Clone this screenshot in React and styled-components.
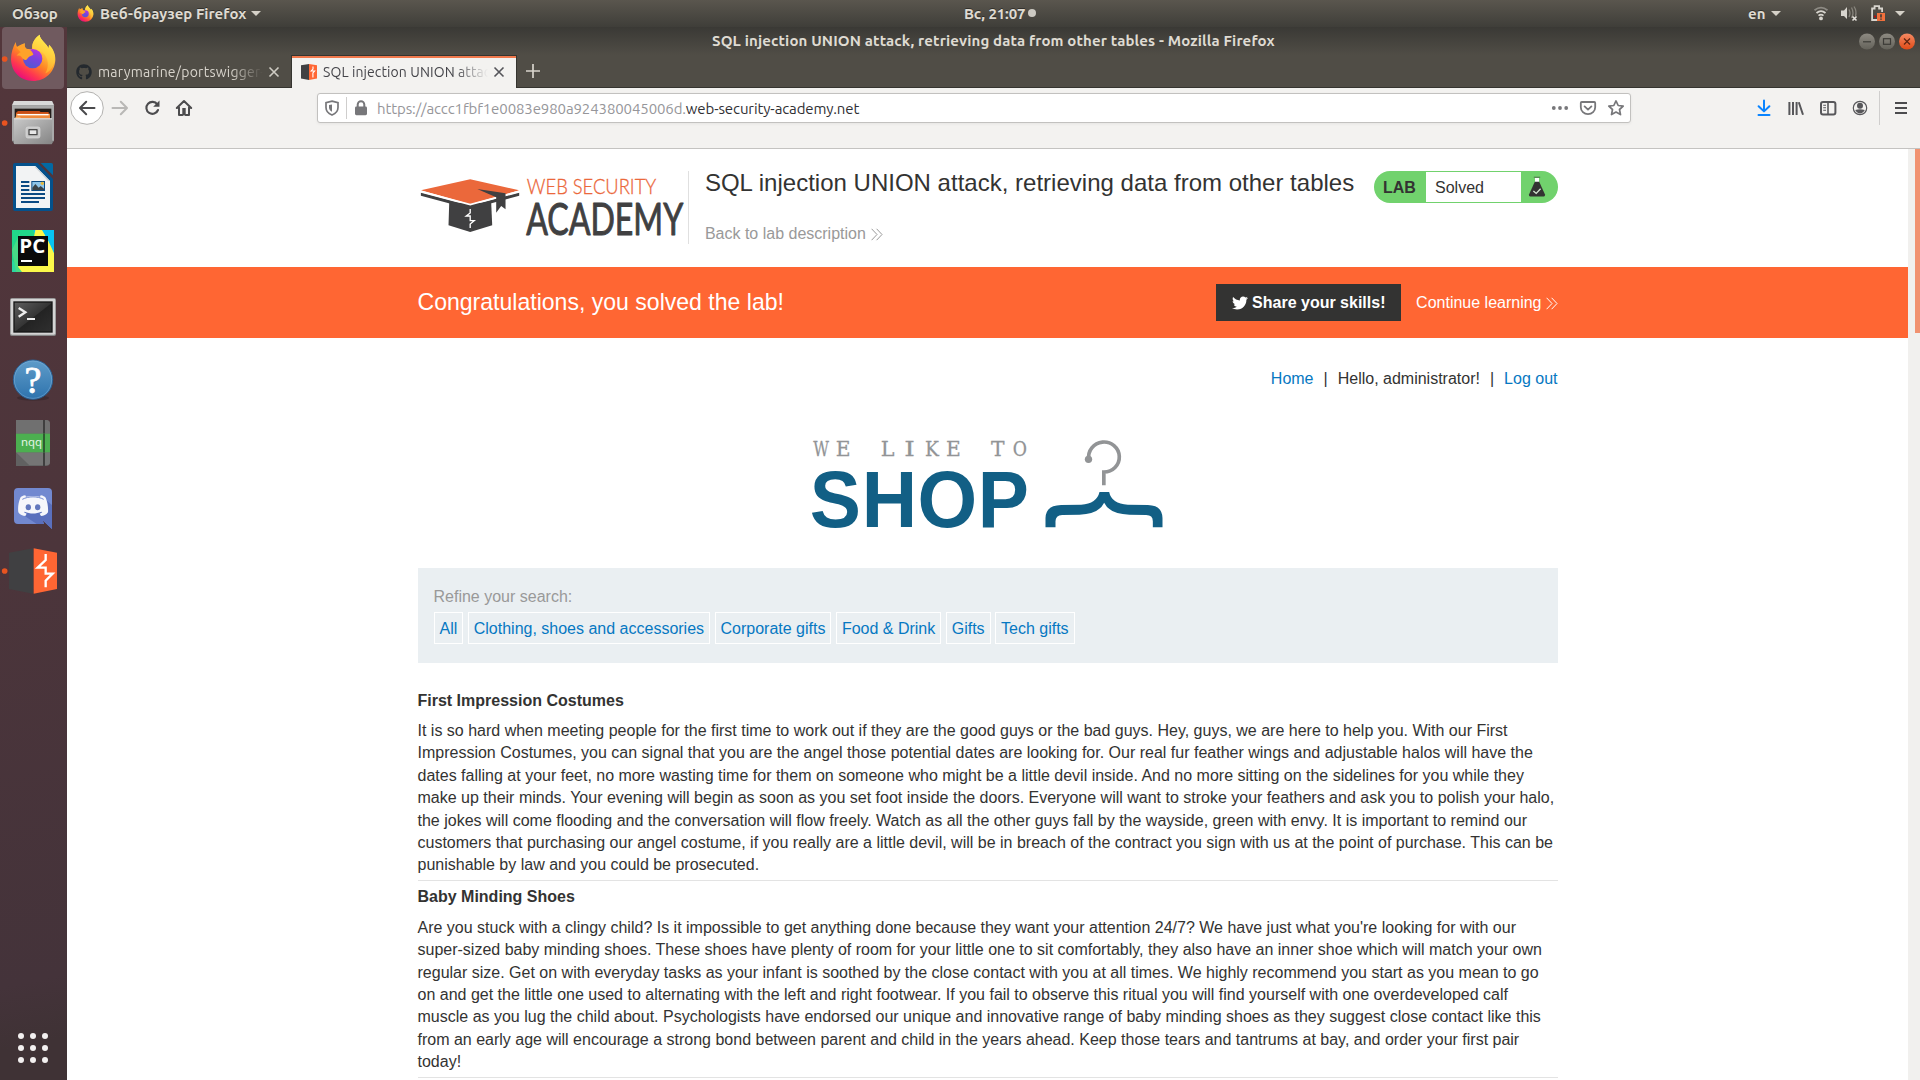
import React from "react";
import styled, { createGlobalStyle } from "styled-components";
import { FaTwitter, FaGithub } from "react-icons/fa";

const GlobalStyle = createGlobalStyle`
  * { box-sizing: border-box; }
  html, body { margin: 0; padding: 0; overflow: hidden; background: #fff; }
  svg { display: block; flex: none; }
`;

const UI_FONT = '"Ubuntu", "Open Sans", "Noto Sans", sans-serif';
const PAGE_FONT = '"Liberation Sans", Arial, sans-serif';

const Desktop = styled.div`
  width: 1920px;
  height: 1080px;
  display: flex;
  flex-direction: column;
  overflow: hidden;
  font-family: ${UI_FONT};
`;

const TopBar = styled.header`
  height: 27px;
  flex: none;
  display: grid;
  grid-template-columns: 964px 1fr auto;
  align-items: center;
  background: linear-gradient(#5a564e, #3f3e39);
  color: #dfdbd2;
  font-size: 15px;
  font-weight: 600;
  line-height: 27px;
`;
const TopGroup = styled.div`
  display: flex;
  align-items: center;
  height: 27px;
`;
const TopLabel = styled.span`
  white-space: nowrap;
  width: ${(p) => p.$w}px;
  margin-left: ${(p) => p.$ml || 0}px;
  letter-spacing: ${(p) => p.$ls || 0}px;
  text-shadow: 0 -1px 0 rgba(0, 0, 0, 0.4);
`;
const Caret = styled.i`
  width: 0;
  height: 0;
  margin: 0 ${(p) => p.$mr || 0}px 0 ${(p) => p.$ml || 0}px;
  border: 5px solid transparent;
  border-top-color: #d5d1c8;
  border-bottom: 0;
`;
const ClockDot = styled.i`
  width: 8px;
  height: 8px;
  margin-bottom: 1px;
  border-radius: 50%;
  background: #ccc9c2;
`;

const Body = styled.div`
  flex: 1;
  min-height: 0;
  display: flex;
`;
const Dock = styled.nav`
  width: 67px;
  flex: none;
  display: flex;
  flex-direction: column;
  background: linear-gradient(168deg, #53363b 0%, #4c353b 50%, #44333a 90%, #3f3235 96%);
`;
const DockItem = styled.div`
  width: 67px;
  height: 64px;
  flex: none;
  padding: 1px 3px 1px 2px;
  svg { margin: -1px 0 0 -2px; }
  & > div {
    height: 62px;
    width: 62px;
    border-radius: 4px;
    background: ${(p) => (p.$active ? "#705a5f" : "transparent")};
  }
`;
const AppsButton = styled.div`
  margin-top: auto;
  padding: 0 0 17px 18px;
  display: grid;
  grid-template-columns: repeat(3, 6px);
  gap: 6px;
`;
const AppDot = styled.i`
  width: 6px;
  height: 6px;
  border-radius: 50%;
  background: #f3f0f0;
`;

const Window = styled.main`
  flex: 1;
  min-width: 0;
  display: flex;
  flex-direction: column;
`;
const TitleBar = styled.div`
  height: 28px;
  flex: none;
  display: grid;
  grid-template-columns: 645px 1fr auto;
  align-items: center;
  background: linear-gradient(#3a3935, #504d46);
  color: #dfdbd2;
  font-size: 15px;
  font-weight: 600;
`;
const TitleText = styled.span`
  grid-column: 2;
  padding-bottom: 2px;
  white-space: nowrap;
  letter-spacing: 0.14px;
`;
const WinButtons = styled.div`
  display: flex;
  gap: 4px;
  padding-right: 5px;
`;

const TabStrip = styled.div`
  height: 33px;
  flex: none;
  display: flex;
  background: #504d46;
  box-shadow: inset 0 -1px 0 #35342f;
`;
const Tab = styled.div`
  width: ${(p) => (p.$active ? 226 : 224)}px;
  display: flex;
  align-items: center;
  padding-left: 9px;
  font-size: 14px;
  color: ${(p) => (p.$active ? "#45454a" : "#d8d4cc")};
  background: ${(p) => (p.$active ? "#f3f2f0" : "transparent")};
  border: solid #35342f;
  border-width: ${(p) => (p.$active ? "1px 1px 0" : "0")};
  box-shadow: ${(p) => (p.$active ? "inset 0 2px 0 #f0784c" : "none")};
`;
const TabText = styled.span`
  width: 165px;
  margin: 0 5px 0 6px;
  overflow: hidden;
  white-space: nowrap;
  letter-spacing: ${(p) => p.$ls || 0}px;
  mask-image: linear-gradient(90deg, #000 80%, transparent 100%);
`;
const NewTab = styled.div`
  padding: 9px 0 0 9px;
`;

const Toolbar = styled.div`
  height: 61px;
  flex: none;
  display: flex;
  align-items: flex-start;
  background: #f3f2f0;
  border-bottom: 1px solid #c4c3c1;
`;
const NavButtons = styled.div`
  width: 250px;
  height: 40px;
  display: flex;
  align-items: center;
  padding-left: 3px;
`;
const UrlBar = styled.div`
  width: 1314px;
  height: 30px;
  margin-top: 5px;
  display: flex;
  align-items: center;
  padding: 0 4px 0 7px;
  background: #fff;
  border: 1px solid #c2c1bf;
  border-radius: 3px;
  box-shadow: 0 1px 3px rgba(0, 0, 0, 0.06);
`;
const Divider = styled.i`
  width: 1px;
  height: ${(p) => p.$h}px;
  background: #cfcecd;
  margin: 0 ${(p) => p.$mr}px 0 ${(p) => p.$ml}px;
`;
const Url = styled.span`
  flex: 1;
  margin-left: 9px;
  padding-top: 1px;
  white-space: nowrap;
  font-size: 15px;
  color: #96969a;
  letter-spacing: -0.11px;
  b { font-weight: 400; color: #303034; }
`;
const UrlActions = styled.div`
  display: flex;
  gap: 8px;
`;
const ToolActions = styled.div`
  flex: 1;
  height: 40px;
  display: flex;
  align-items: center;
  justify-content: flex-end;
  padding-right: 9px;
`;
const ToolGroup = styled.div`
  display: flex;
  gap: 12px;
`;

const Viewport = styled.div`
  flex: 1;
  min-height: 0;
  display: flex;
  overflow: hidden;
  font-family: ${PAGE_FONT};
  font-size: 16px;
  line-height: 22.4px;
  color: #333332;
`;
const Page = styled.div`
  flex: 1;
  background: #fff;
  overflow: hidden;
`;
const ScrollTrack = styled.div`
  width: 12px;
  background: #f1f0ee;
  display: flex;
  justify-content: flex-end;
`;
const ScrollThumb = styled.div`
  width: 5px;
  height: 184px;
  background: #f19270;
`;
const Container = styled.div`
  width: 1140px;
  margin: 0 auto;
`;
const LabHeader = styled(Container)`
  height: 118px;
  display: flex;
  align-items: flex-start;
  padding-top: 22px;
`;
const LabTitle = styled.div`
  flex: 1;
  height: 73px;
  padding-left: 16px;
  border-left: 1px solid #e0e0e0;
  h2 {
    margin: -2px 0 26px;
    font-size: 24px;
    line-height: 28px;
    font-weight: 400;
    letter-spacing: 0.01px;
  }
`;
const ArrowLink = styled.a`
  display: flex;
  align-items: center;
  gap: ${(p) => p.$gap}px;
  padding-top: ${(p) => p.$pt || 0}px;
  color: ${(p) => p.$color};
`;
const Badge = styled.div`
  width: 184px;
  height: 32px;
  display: flex;
  align-items: stretch;
  padding: 1px 0;
  border-radius: 16px;
  background: #71d26d;
  line-height: 30px;
  b { width: 52px; padding: 1px 0 0 9.5px; }
  span { width: 95px; padding: 1px 0 0 9.5px; background: #fff; }
`;
const BadgeIcon = styled.div`
  flex: 1;
  padding: 4px 0 0 7px;
`;
const Banner = styled.div`
  height: 71px;
  background: #ff6633;
  color: #fff;
`;
const BannerRow = styled(Container)`
  height: 71px;
  display: flex;
  align-items: center;
  h4 { flex: 1; margin: 0; padding-bottom: 1px; font-size: 23.05px; line-height: 28px; font-weight: 400; }
`;
const ShareButton = styled.button`
  width: 185px;
  height: 37px;
  margin-right: 15px;
  padding: 0;
  display: flex;
  align-items: center;
  justify-content: center;
  gap: 4.4px;
  border: 0;
  background: #333332;
  color: #fff;
  font: bold 16px ${PAGE_FONT};
`;
const AccountNav = styled(Container)`
  display: flex;
  justify-content: flex-end;
  padding-top: 30px;
  gap: 10px;
`;
const Link = styled.a`
  color: #0678c2;
`;
const ShopHeader = styled(Container)`
  height: 177.6px;
  display: flex;
  padding: 48.6px 0 0 389.5px;
`;
const Filters = styled(Container)`
  height: 95px;
  padding: 18px 16px;
  background: #eaeff2;
  p { margin: 0 0 3.6px; color: #999; }
`;
const FilterList = styled.div`
  display: flex;
  gap: 4.45px;
`;
const Filter = styled.a`
  height: 32px;
  padding: 0 5px;
  line-height: 31px;
  border: 1px solid #fff;
  color: #0678c2;
`;
const Products = styled(Container)`
  padding-top: 26.6px;
`;
const Product = styled.article`
  padding-bottom: 3.2px;
  margin-bottom: 5.4px;
  border-bottom: 1px solid #e3e3e3;
  h3 { margin: 0 0 8px; font-size: 16px; line-height: 22.4px; }
  p { margin: 0; }
`;

const FoxArt = ({ id }) => (
  <g>
    <defs>
      <linearGradient id={id + "a"} x1="0.8" y1="0.1" x2="0.25" y2="0.95">
        <stop offset="0" stopColor="#fff44f" />
        <stop offset="0.3" stopColor="#ffbd3a" />
        <stop offset="0.55" stopColor="#ff8424" />
        <stop offset="0.8" stopColor="#ff3750" />
        <stop offset="1" stopColor="#ea0e7a" />
      </linearGradient>
      <linearGradient id={id + "b"} x1="0.7" y1="0" x2="0.3" y2="1">
        <stop offset="0" stopColor="#b833e1" />
        <stop offset="0.45" stopColor="#7a42e0" />
        <stop offset="1" stopColor="#4d5bd0" />
      </linearGradient>
      <linearGradient id={id + "c"} x1="0.7" y1="0" x2="0.4" y2="1">
        <stop offset="0" stopColor="#fff351" />
        <stop offset="0.6" stopColor="#ffc63a" />
        <stop offset="1" stopColor="#ff9a2a" />
      </linearGradient>
    </defs>
    <path fill={`url(#${id}a)`} d="M47 66C48 74 50 80 54 84C60 76 68 71 75 70C73 76 74 82 78 86C85 87 92 88 97 86C95 70 103 55 119 44C120 58 132 64 140 76L146 84L147 74C158 84 167 100 166 120C164 158 134 183 99 183C62 183 34 156 33 118C33 98 39 82 47 66Z" />
    <path fill={`url(#${id}c)`} d="M97 86C95 70 103 55 119 44C120 58 132 64 140 76L146 86L147 76C158 88 166 102 164 122C160 142 148 156 136 160C148 140 146 112 128 98C118 92 104 92 97 86Z" />
    <circle cx="98" cy="116" r="29" fill={`url(#${id}b)`} />
    <path fill="#ffa229" d="M49 82C60 74 66 72 74 72C73 78 76 84 82 88C92 88 98 96 100 104C92 108 84 110 81 118C76 124 68 116 64 110C60 106 54 106 50 108C54 100 60 98 62 97Z" />
  </g>
);

const FoxMini = () => (
  <svg width="17" height="17" viewBox="30 42 139 143"><FoxArt id="m" /></svg>
);

const BurpMini = () => (
  <svg width="16" height="16" viewBox="0 0 16 16">
    <path d="M0 1.2 8 0V16L0 14.6Z" fill="#404042" />
    <path d="M8 0 16 1.2V14.6L8 16Z" fill="#ff6633" />
    <path d="M12 2.4V5L10.2 7H13.6L11.9 9V13.6" stroke="#fff" strokeWidth="1.1" fill="none" />
  </svg>
);

const Dot = ({ y }) => <circle cx="14" cy={y} r="8.5" fill="#e95420" />;

const dockIcons = [
  { y: 21, art: <><Dot y={117} /><FoxArt id="d" /></> },
  {
    y: 213,
    art: (
      <>
        <defs>
          <linearGradient id="cab" x1="0" y1="0" x2="1" y2="1"><stop offset="0" stopColor="#c9c9c9" /><stop offset="1" stopColor="#858585" /></linearGradient>
        </defs>
        <Dot y={309} />
        <path d="M42 243H156L162 256V362L155 373H43L36 362V256Z" fill="#7d7d7d" />
        <path d="M42 243H156L162 256H36Z" fill="#d9d9d9" />
        <path d="M36 256H162V362H36Z" fill="#a9a9a9" />
        <rect x="44" y="266" width="110" height="32" fill="#241d1a" />
        <path d="M54 273H118L122 276H146V298H48V278Z" fill="#c74d16" />
        <path d="M48 281H150V298H48Z" fill="#f08a3c" />
        <rect x="52" y="282" width="94" height="4" fill="#fff" />
        <path d="M46 290H60L64 296H150V300H46Z" fill="#f9b06b" />
        <rect x="42" y="295" width="114" height="77" fill="url(#cab)" />
        <rect x="42" y="295" width="114" height="3" fill="#e4e4e4" />
        <rect x="78" y="321" width="42" height="33" rx="6" fill="#c9c9c9" stroke="#dcdcdc" strokeWidth="2" />
        <rect x="85" y="327" width="28" height="19" rx="2" fill="#4b4b4b" />
        <rect x="89" y="331" width="20" height="11" fill="#e7e7e7" />
      </>
    ),
  },
  {
    y: 405,
    art: (
      <>
        <path d="M45 429H113L159 477V567Q159 573 153 573H45Q39 573 39 567V435Q39 429 45 429Z" fill="#04518c" />
        <path d="M122 429H154Q159 429 159 434V466Z" fill="#0369a3" />
        <path d="M48 438H106L150 483V564H48Z" fill="#f2f3f4" />
        <path d="M106 438 150 483H150L144 483 104 441Z" fill="#cfd4d8" />
        <path d="M63 486H88M63 498H88M63 510H88M63 522H135M63 534H135M63 546H117" stroke="#0b4a83" strokeWidth="6" />
        <rect x="94" y="483" width="41" height="30" fill="#0b4a83" />
        <rect x="97" y="486" width="35" height="24" fill="#8ec5ea" />
        <path d="M97 510V503L106 492 116 503 122 498 132 506V510Z" fill="#3b4348" />
        <circle cx="127" cy="490" r="5" fill="#e7b93c" />
      </>
    ),
  },
  {
    y: 597,
    art: (
      <>
        <rect x="36" y="630" width="126" height="126" fill="#21d789" />
        <path d="M36 720 66 756H36Z" fill="#2bd7a0" />
        <path d="M100 630H162V756L120 690Z" fill="#0bc4ea" />
        <path d="M36 690 60 640 66 756H48Z" fill="#47dc86" />
        <path d="M106 630H126L162 690V756H66L54 740 100 660Z" fill="#fcf84a" />
        <path d="M128 630H162V700L144 660Z" fill="#07c3f2" />
        <rect x="54" y="648" width="90" height="90" fill="#0a0a0a" />
        <text x="58" y="700" fontFamily='"Open Sans"' fontWeight="700" fontSize="57" textLength="78" lengthAdjust="spacingAndGlyphs" fill="#fff">PC</text>
        <rect x="63" y="720" width="33" height="6" fill="#fff" />
      </>
    ),
  },
  {
    y: 789,
    art: (
      <>
        <defs>
          <linearGradient id="term" x1="0" y1="0" x2="1" y2="1"><stop offset="0" stopColor="#5d5d5d" /><stop offset="0.5" stopColor="#353535" /><stop offset="0.52" stopColor="#232323" /><stop offset="1" stopColor="#2f2f2f" /></linearGradient>
        </defs>
        <rect x="30" y="834" width="138" height="114" rx="5" fill="#858585" />
        <rect x="32" y="836" width="134" height="108" rx="4" fill="#d4d4d4" />
        <rect x="40" y="844" width="118" height="94" fill="#151515" />
        <rect x="44" y="848" width="110" height="86" fill="url(#term)" />
        <path d="M56 864 76 877 56 890" stroke="#eee" strokeWidth="7" fill="none" />
        <rect x="81" y="894" width="24" height="6" fill="#eee" />
      </>
    ),
  },
  {
    y: 21,
    art: (
      <>
        <defs>
          <linearGradient id="help" x1="0" y1="0" x2="0" y2="1"><stop offset="0" stopColor="#5f9cc9" /><stop offset="1" stopColor="#2e73ad" /></linearGradient>
        </defs>
        <ellipse cx="99" cy="174" rx="48" ry="8" fill="#000" opacity="0.18" />
        <circle cx="99" cy="119" r="59" fill="url(#help)" stroke="#2a5f92" strokeWidth="3" />
        <circle cx="99" cy="119" r="56" fill="none" stroke="#86b5dc" strokeWidth="2" opacity="0.7" />
        <text x="99" y="160" textAnchor="middle" fontFamily='"Liberation Serif"' fontWeight="400" fontSize="114" fill="#fff" stroke="#fff" strokeWidth="2.5">?</text>
      </>
    ),
  },
  {
    y: 213,
    art: (
      <>
        <path d="M48 240H138Q150 240 150 252V366Q150 378 138 378H48Z" fill="#616161" />
        <path d="M48 240H138Q150 240 150 252V281H48Z" fill="#707070" />
        <path d="M48 337 88 376H138Q150 376 150 366V337Z" fill="#757575" />
        <rect x="129" y="240" width="6" height="138" fill="#3f3f3f" />
        <rect x="48" y="281" width="102" height="56" fill="#4caf50" />
        <rect x="129" y="281" width="6" height="56" fill="#2f5b31" />
        <text x="63" y="317" fontFamily='"Noto Sans"' fontSize="33" textLength="63" lengthAdjust="spacingAndGlyphs" fill="#e5f4e6">nqq</text>
      </>
    ),
  },
  {
    y: 405,
    art: (
      <>
        <path d="M54 444H144Q156 444 156 456V567L128 541 132 552H54Q42 552 42 540V456Q42 444 54 444Z" fill="#7289d0" />
        <path d="M122 467 156 495V567L128 541 132 552H110L62 520Z" fill="#5a70bd" />
        <path d="M76 466C68 467 63 470 61 473C55 487 53 503 55 517C60 525 68 528 76 528L80 521L72 517L74 515C90 522 108 522 124 515L127 517L119 521L123 528C131 528 139 525 144 517C145 503 143 487 137 473C134 470 129 467 122 466L120 470C106 467 92 467 78 470Z" fill="#f6f7fb" />
        <ellipse cx="85" cy="502" rx="8" ry="9" fill="#6378bd" />
        <ellipse cx="113" cy="502" rx="8" ry="9" fill="#6378bd" />
        <path d="M67 478C85 468 113 468 131 478" stroke="#7289d0" strokeWidth="3" fill="none" />
      </>
    ),
  },
  {
    y: 597,
    art: (
      <>
        <Dot y={693} />
        <path d="M27 638 99 625V761L27 747Z" fill="#404042" />
        <path d="M101 625 171 638V747L101 761Z" fill="#ff6633" />
        <path d="M137 642V660L113 683H137V701H158L137 722V742" stroke="#fff" strokeWidth="7" fill="none" />
      </>
    ),
  },
];

const Chevrons = ({ color }) => (
  <svg width="12" height="13" viewBox="0 0 12 13" fill="none" stroke={color} strokeWidth="1">
    <path d="M0.6 0.8 6 6.5 0.6 12.2M5.6 0.8 11 6.5 5.6 12.2" />
  </svg>
);

const CloseX = ({ color }) => (
  <svg width="12" height="12" viewBox="0 0 12 12" stroke={color} strokeWidth="1.6"><path d="M1.5 1.5 10.5 10.5M10.5 1.5 1.5 10.5" /></svg>
);

const StatusIcons = () => (
  <svg width="84" height="27" viewBox="0 0 84 27" fill="none">
    <g stroke="#d8d5ce" strokeWidth="1.8">
      <path d="M4.5 10.2Q11 5 17.5 10.2" opacity="0.45" />
      <path d="M6.5 13Q11 9.3 15.5 13" />
      <path d="M8.5 15.6Q11 13.7 13.5 15.6" />
    </g>
    <circle cx="11" cy="18.4" r="1.9" fill="#d8d5ce" />
    <path d="M31 10.5H34L37 7V19L34 16H31Z" fill="#d8d5ce" />
    <path d="M39 9.5Q41 13 39 17M41.5 7.5Q44.5 13 41.5 18M44 6.5Q47 11 45.5 16" stroke="#88857d" strokeWidth="1.3" />
    <path d="M42.5 16.5 46.5 20.5M46.5 16.5 42.5 20.5" stroke="#e3e0da" strokeWidth="1.6" />
    <path d="M67.6 20H62.1V8.5H64.6V6.2H69.1V8.5H72.1V12" stroke="#d8d5ce" strokeWidth="1.8" />
    <rect x="67" y="13" width="8" height="8" fill="#f0703c" />
    <path d="M71 14.3V17.4M71 18.4V19.8" stroke="#3c3b37" strokeWidth="1.6" />
    <circle cx="65" cy="16.5" r="1" fill="#c00" />
  </svg>
);

const WindowButton = ({ kind }) => {
  const close = kind === "close";
  return (
    <svg width="16" height="17" viewBox="0 0 16 17">
      <defs>
        <linearGradient id={"wb" + kind} x1="0" y1="0" x2="0" y2="1">
          <stop offset="0" stopColor={close ? "#f58a63" : "#8d8a82"} />
          <stop offset="1" stopColor={close ? "#df4a16" : "#64625a"} />
        </linearGradient>
      </defs>
      <circle cx="8" cy="8.5" r="8" fill={`url(#wb${kind})`} />
      <g stroke={close ? "#5e2410" : "#3c3b37"} strokeWidth="1.2" fill="none">
        {kind === "min" && <path d="M4 8.8H12" />}
        {kind === "max" && <rect x="4.5" y="5.7" width="7" height="5.6" />}
        {close && <path d="M5 5.5 11 11.5M11 5.5 5 11.5" />}
      </g>
    </svg>
  );
};

const NavIcons = () => (
  <svg width="140" height="40" viewBox="0 0 140 40" fill="none">
    <circle cx="17" cy="20" r="16.3" fill="#fff" stroke="#b3b2b0" />
    <path d="M24.5 20H10.5M16.2 13.8 10 20 16.2 26.2" stroke="#4a4a4c" strokeWidth="2" strokeLinecap="round" strokeLinejoin="round" />
    <path d="M42.5 20H56.5M50.8 13.8 57 20 50.8 26.2" stroke="#b9b8b6" strokeWidth="2" strokeLinecap="round" strokeLinejoin="round" />
    <path d="M87.3 16.4A6 6 0 1 0 88 22" stroke="#4c4c4e" strokeWidth="2.1" strokeLinecap="round" />
    <path d="M89.5 12.5V18.8H83.2Z" fill="#4c4c4e" />
    <path d="M106.8 20 114 13 121.2 20M109 19.5V27H112.3M119 19.5V27H115.7" stroke="#4c4c4e" strokeWidth="2" strokeLinecap="round" strokeLinejoin="round" />
    <rect x="112.3" y="20" width="3.4" height="7.4" fill="#4c4c4e" />
  </svg>
);

const ShieldIcon = () => (
  <svg width="14" height="16" viewBox="0 0 14 16" fill="none" stroke="#77777a" strokeWidth="1.7">
    <path d="M7 1.2 13 2.6V7.5C13 11 10.5 13.6 7 15C3.5 13.6 1 11 1 7.5V2.6Z" />
    <path d="M7 4.4V11.8C5.2 10.9 4 9.4 4 7.3V5Z" fill="#77777a" stroke="none" />
  </svg>
);
const LockIcon = () => (
  <svg width="14" height="16" viewBox="0 0 14 16">
    <path d="M3.7 7V4.6A3.3 3.3 0 0 1 10.3 4.6V7" fill="none" stroke="#77777a" strokeWidth="2" />
    <rect x="1" y="6.5" width="12" height="8.7" rx="1.4" fill="#77777a" />
  </svg>
);
const actionIcons = [
  <g key="a" fill="#77777a"><circle cx="3.8" cy="10" r="1.9" /><circle cx="10" cy="10" r="1.9" /><circle cx="16.2" cy="10" r="1.9" /></g>,
  <g key="b" fill="none" stroke="#77777a" strokeWidth="1.8" strokeLinecap="round" strokeLinejoin="round"><path d="M3.8 4H16.2Q17.2 4 17.2 5V9.2A7.2 7 0 0 1 2.8 9.2V5Q2.8 4 3.8 4Z" /><path d="M6.6 8.4 10 11.6 13.4 8.4" /></g>,
  <path key="c" fill="none" stroke="#77777a" strokeWidth="1.7" strokeLinejoin="round" d="M10 2.9 12.2 7.5 17.2 8.1 13.5 11.5 14.5 16.6 10 14.1 5.5 16.6 6.5 11.5 2.8 8.1 7.8 7.5Z" />,
];
const toolIcons = [
  <path key="a" d="M10 2.5V13M4.6 8.2 10 13.4 15.4 8.2M4.5 17H15.5" stroke="#0a84ff" strokeWidth="2" fill="none" strokeLinecap="round" strokeLinejoin="round" />,
  <path key="b" d="M3.4 4V17M7 4V17M10.6 4V17M12.8 4.2 17 16.8" stroke="#57575a" strokeWidth="2" fill="none" />,
  <g key="c" stroke="#57575a" fill="none"><rect x="3" y="4" width="14.4" height="12.4" rx="2" strokeWidth="2" /><path d="M10 4V16.4" strokeWidth="1.6" /><path d="M5.2 7.2H8M5.2 9.7H8M5.2 12.2H8" strokeWidth="1.1" /></g>,
  <g key="d"><circle cx="10" cy="10" r="6.7" fill="none" stroke="#57575a" strokeWidth="1.2" /><circle cx="10" cy="7.8" r="3" fill="#57575a" /><path d="M5.2 12Q10 10.4 14.8 12 13 15.4 10 15.4T5.2 12Z" fill="#57575a" /></g>,
];

const AcademyLogo = () => (
  <svg width="270.4" height="72" viewBox="0 0 270.4 72" overflow="visible">
    <g transform="translate(-17.8 -21) scale(0.33333)">
      <path d="M147 158H273L276 226 210 246 145 226Z" fill="#404041" />
      <path d="M62 128 210 167 357 128V137L210 177 62 137Z" fill="#404041" />
      <path d="M62 121 210 88 357 121 210 163Z" fill="#eb683b" />
      <path d="M62 124 210 164 357 124" fill="none" stroke="#fff" strokeWidth="5" />
      <path d="M231 117 316 130V178L303 168 288 188V142Z" fill="#404041" />
      <path d="M210 177V189L198 198H210V212H222L210 222V234" stroke="#fff" strokeWidth="4" fill="none" />
      <text x="380" y="133" fontFamily="Lato" fontWeight="300" fontSize="67" fill="#eb683b" stroke="#eb683b" strokeWidth="1" textLength="388" lengthAdjust="spacingAndGlyphs">WEB SECURITY</text>
      <text x="378" y="254" fontFamily="Lato" fontSize="134" fill="#404041" stroke="#404041" strokeWidth="3" strokeLinejoin="round" textLength="471" lengthAdjust="spacingAndGlyphs">ACADEMY</text>
    </g>
  </svg>
);

const FlaskIcon = () => (
  <svg width="18" height="22" viewBox="0 0 18 22">
    <path d="M5.8 1.3H12.2" stroke="#5b8a58" strokeWidth="1.4" />
    <rect x="7" y="2" width="4" height="4.5" fill="#fff" />
    <path d="M6.8 5.8H11.2L17 18.6Q17.3 20.6 15.8 20.6H2.2Q0.7 20.6 1 18.6Z" fill="#333332" />
    <path d="M5.4 15 8.2 17.4 12.6 12.8" stroke="#d5e8d4" strokeWidth="1.3" fill="none" />
  </svg>
);

const taglineLetters = [["W", 125, 0.74], ["E", 191, 0.98], ["L", 324, 1], ["I", 390, 1.3], ["K", 457, 0.9], ["E", 522, 0.98], ["T", 655, 0.98], ["O", 721, 0.84]];
const wordLetters = [["S", 91], ["H", 246.6], ["O", 414], ["P", 595]];

const ShopLogo = () => (
  <svg width="360" height="100" viewBox="0 0 360 100" overflow="visible">
    <g transform="translate(-27.5 -29.3) scale(0.33333)">
      {taglineLetters.map(([ch, x, sx]) => (
        <text key={x} transform={`translate(${x} 139.5) scale(${sx} 1)`} textAnchor="middle" fontFamily='"DejaVu Serif"' fontSize="62" fill="#929496" stroke="#929496" strokeWidth="0.8">{ch}</text>
      ))}
      {wordLetters.map(([ch, x]) => (
        <text key={x} transform={`translate(${x} 353) scale(0.955 1)`} fontFamily='"Liberation Sans"' fontWeight="700" fontSize="241" fill="#125f85">{ch}</text>
      ))}
      <path d="M928 149A46 45 0 1 1 973 187V227" fill="none" stroke="#929496" strokeWidth="11" />
      <circle cx="927" cy="149" r="11" fill="#929496" />
      <path fill="#125f85" d="M798 353V325Q799 287 845 286L905 285Q952 282 960 247H989Q996 282 1045 285L1105 286Q1148 287 1149 325V353H1120V335Q1120 316 1100 316L1050 315Q990 313 974 279Q958 313 900 315L848 316Q828 317 828 335V353Z" />
    </g>
  </svg>
);

const categories = ["All", "Clothing, shoes and accessories", "Corporate gifts", "Food & Drink", "Gifts", "Tech gifts"];

const products = [
  {
    name: "First Impression Costumes",
    text: "It is so hard when meeting people for the first time to work out if they are the good guys or the bad guys. Hey, guys, we are here to help you. With our First Impression Costumes, you can signal that you are the angel those potential dates are looking for. Our real fur feather wings and adjustable halos will have the dates falling at your feet, no more wasting time for them on someone who might be a little devil inside. And no more sitting on the sidelines for you while they make up their minds. Your evening will begin as soon as you set foot inside the doors. Everyone will want to stroke your feathers and ask you to polish your halo, the jokes will come flooding and the conversation will flow freely. Watch as all the other guys fall by the wayside, green with envy. It is important to remind our customers that purchasing our angel costume, if you really are a little devil, will be in breach of the contract you sign with us at the point of purchase. This can be punishable by law and you could be prosecuted.",
  },
  {
    name: "Baby Minding Shoes",
    text: "Are you stuck with a clingy child? Is it impossible to get anything done because they want your attention 24/7? We have just what you're looking for with our super-sized baby minding shoes. These shoes have plenty of room for your little one to sit comfortably, they also have an inner shoe which will match your own regular size. Get on with everyday tasks as your infant is soothed by the close contact with you at all times. We highly recommend you start as you mean to go on and get the little one used to alternating with the left and right footwear. If you fail to observe this ritual you will find yourself with one overdeveloped calf muscle as you lug the child about. Psychologists have endorsed our unique and innovative range of baby minding shoes as they suggest close contact like this from an early age will encourage a strong bond between parent and child in the years ahead. Keep those tears and tantrums at bay, and order your first pair today!",
  },
];

export default function App() {
  return (
    <Desktop>
      <GlobalStyle />
      <TopBar>
        <TopGroup>
          <TopLabel $ml={12} $w={65} $ls={-0.1}>Обзор</TopLabel>
          <FoxMini />
          <TopLabel $ml={6} $w={151} $ls={0.02}>Веб-браузер Firefox</TopLabel>
          <Caret />
        </TopGroup>
        <TopGroup>
          <TopLabel $w={64} $ls={-0.1}>Вс, 21:07</TopLabel>
          <ClockDot />
        </TopGroup>
        <TopGroup>
          <TopLabel $w={23}>en</TopLabel>
          <Caret $mr={29} />
          <StatusIcons />
          <Caret $ml={1} $mr={15} />
        </TopGroup>
      </TopBar>
      <Body>
        <Dock>
          {dockIcons.map((icon, i) => (
            <DockItem key={i} $active={i === 0}>
              <div>
                <svg width="67" height="64" viewBox={`0 ${icon.y} 201 192`}>{icon.art}</svg>
              </div>
            </DockItem>
          ))}
          <AppsButton>
            {Array.from({ length: 9 }, (_, i) => <AppDot key={i} />)}
          </AppsButton>
        </Dock>
        <Window>
          <TitleBar>
            <TitleText>SQL injection UNION attack, retrieving data from other tables - Mozilla Firefox</TitleText>
            <WinButtons>
              <WindowButton kind="min" />
              <WindowButton kind="max" />
              <WindowButton kind="close" />
            </WinButtons>
          </TitleBar>
          <TabStrip>
            <Tab>
              <FaGithub size={16} color="#24292e" />
              <TabText $ls={0.25}>marymarine/portswigger-labs</TabText>
              <CloseX color="#cfccc4" />
            </Tab>
            <Tab $active>
              <BurpMini />
              <TabText $ls={0.1}>SQL injection UNION attack</TabText>
              <CloseX color="#55555a" />
            </Tab>
            <NewTab>
              <svg width="14" height="14" viewBox="0 0 14 14" stroke="#d8d4cc" strokeWidth="1.7"><path d="M7 0V14M0 7H14" /></svg>
            </NewTab>
          </TabStrip>
          <Toolbar>
            <NavButtons><NavIcons /></NavButtons>
            <UrlBar>
              <ShieldIcon />
              <Divider $h={22} $ml={7} $mr={7} />
              <LockIcon />
              <Url>https://accc1fbf1e0083e980a924380045006d.<b>web-security-academy.net</b></Url>
              <UrlActions>
                {actionIcons.map((icon, i) => <svg key={i} width="20" height="20" viewBox="0 0 20 20">{icon}</svg>)}
              </UrlActions>
            </UrlBar>
            <ToolActions>
              <ToolGroup>
                {toolIcons.map((icon, i) => <svg key={i} width="20" height="20" viewBox="0 0 20 20">{icon}</svg>)}
              </ToolGroup>
              <Divider $h={34} $ml={9} $mr={11} />
              <svg width="20" height="20" viewBox="0 0 20 20"><path d="M4 5H16M4 10H16M4 15H16" stroke="#4c4c4e" strokeWidth="2" /></svg>
            </ToolActions>
          </Toolbar>
          <Viewport>
            <Page>
              <LabHeader>
                <AcademyLogo />
                <LabTitle>
                  <h2>SQL injection UNION attack, retrieving data from other tables</h2>
                  <ArrowLink $color="#999" $gap={5}>Back to lab description<Chevrons color="#999" /></ArrowLink>
                </LabTitle>
                <Badge>
                  <b>LAB</b>
                  <span>Solved</span>
                  <BadgeIcon><FlaskIcon /></BadgeIcon>
                </Badge>
              </LabHeader>
              <Banner>
                <BannerRow>
                  <h4>Congratulations, you solved the lab!</h4>
                  <ShareButton><FaTwitter size={16} />Share your skills!</ShareButton>
                  <ArrowLink $color="#fff" $gap={4} $pt={1}>Continue learning<Chevrons color="#fff" /></ArrowLink>
                </BannerRow>
              </Banner>
              <AccountNav>
                <Link>Home</Link>
                <span>|</span>
                <span>Hello, administrator!</span>
                <span>|</span>
                <Link>Log out</Link>
              </AccountNav>
              <ShopHeader><ShopLogo /></ShopHeader>
              <Filters>
                <p>Refine your search:</p>
                <FilterList>
                  {categories.map((c) => <Filter key={c}>{c}</Filter>)}
                </FilterList>
              </Filters>
              <Products>
                {products.map((p) => (
                  <Product key={p.name}>
                    <h3>{p.name}</h3>
                    <p>{p.text}</p>
                  </Product>
                ))}
              </Products>
            </Page>
            <ScrollTrack><ScrollThumb /></ScrollTrack>
          </Viewport>
        </Window>
      </Body>
    </Desktop>
  );
}
